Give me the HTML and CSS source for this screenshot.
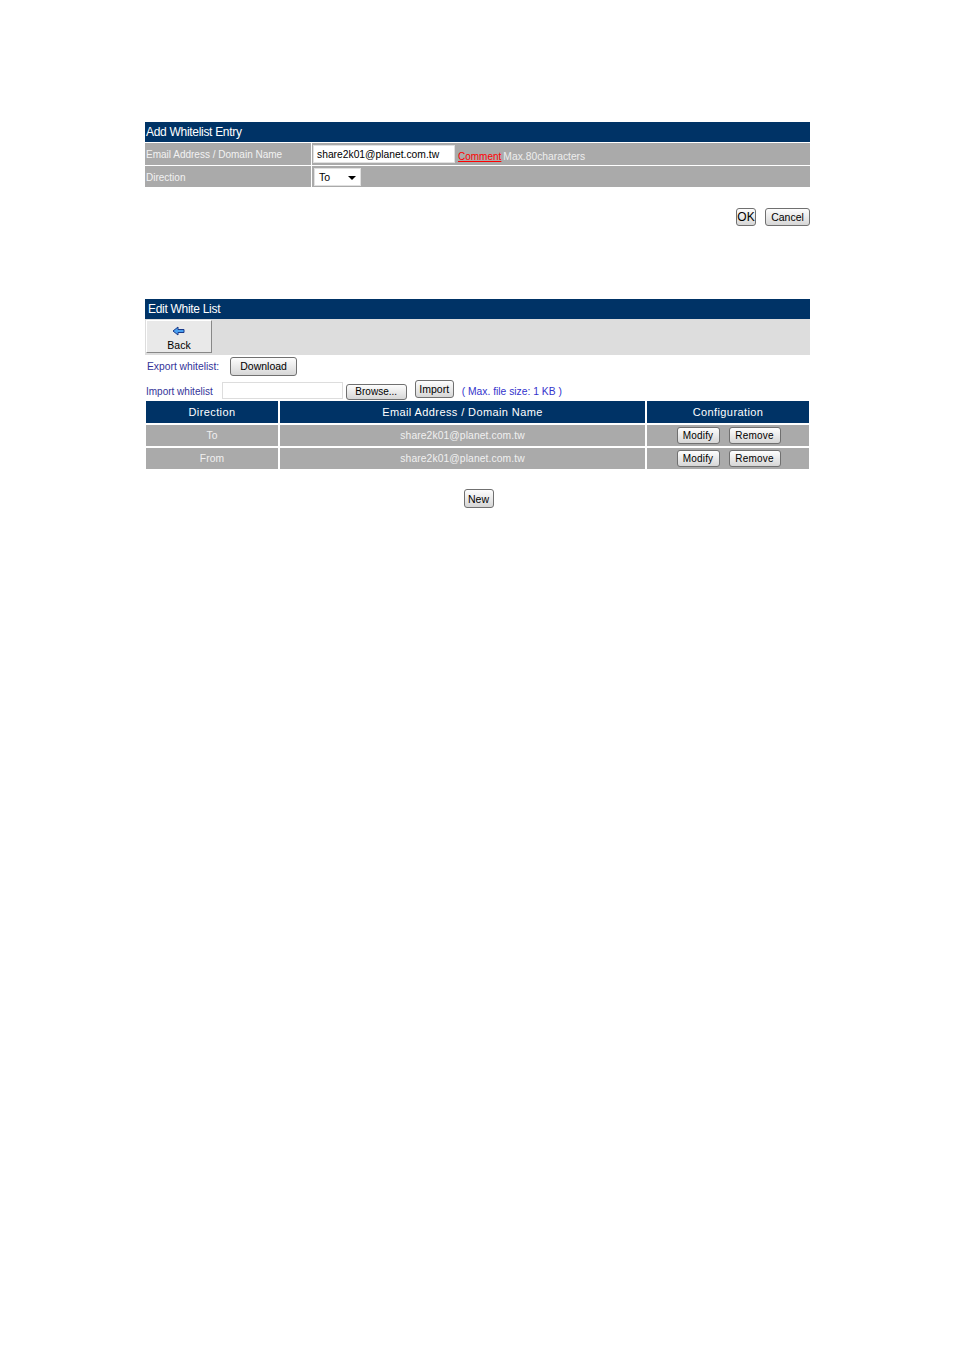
FILE: index.html
```html
<!DOCTYPE html>
<html>
<head>
<meta charset="utf-8">
<link rel="stylesheet" href="styles.css">
</head>
<body>
<div class="page">
  <section class="entry">
    <div class="bar">Add Whitelist Entry</div>
    <div class="form">
      <div class="lbl">Email Address / Domain Name</div>
      <div class="val val1">
        <span class="input">share2k01@planet.com.tw</span>
        <a class="comment">Comment</a><span class="hint">Max.80characters</span>
      </div>
      <div class="lbl">Direction</div>
      <div class="val val2">
        <span class="select">To<span class="caret"></span></span>
      </div>
    </div>
    <div class="actions">
      <button class="btn ok">OK</button>
      <button class="btn cancel">Cancel</button>
    </div>
  </section>

  <section class="edit">
    <div class="bar bar2">Edit White List</div>
    <div class="toolbar">
      <div class="back">
        <svg width="14" height="10" viewBox="0 0 14 10"><path d="M1 5 L6 1 L6 3.5 L12 3.5 L12 6.5 L6 6.5 L6 9 Z" fill="#4aa0f0" stroke="#1a3a8a" stroke-width="1" stroke-linejoin="round"/></svg>
        <span>Back</span>
      </div>
    </div>
    <div class="export">
      <span class="blue">Export whitelist:</span>
      <button class="btn download">Download</button>
    </div>
    <div class="import">
      <span class="blue small">Import whitelist</span>
      <span class="file"></span>
      <button class="btn browse">Browse...</button>
      <button class="btn importbtn">Import</button>
      <span class="max">( Max. file size: 1 KB )</span>
    </div>
    <div class="list">
      <div class="th">Direction</div>
      <div class="th">Email Address / Domain Name</div>
      <div class="th">Configuration</div>
      <div class="td">To</div>
      <div class="td">share2k01@planet.com.tw</div>
      <div class="td cfg"><button class="btn sm">Modify</button><button class="btn sm rm">Remove</button></div>
      <div class="td">From</div>
      <div class="td">share2k01@planet.com.tw</div>
      <div class="td cfg"><button class="btn sm">Modify</button><button class="btn sm rm">Remove</button></div>
    </div>
    <div class="newrow"><button class="btn new">New</button></div>
  </section>
</div>
</body>
</html>
```

FILE: styles.css
```css
* { box-sizing: border-box; }
body {
  margin: 0;
  background: #fff;
  font-family: "Liberation Sans", Arial, sans-serif;
  font-size: 11px;
  color: #000;
}
.page {
  padding: 122px 0 0 145px;
  width: 810px;
}
.bar {
  background: #003366;
  color: #fff;
  font-size: 12px;
  height: 20px;
  line-height: 20px;
  padding-left: 1px;
  letter-spacing: -0.3px;
}
.form {
  display: grid;
  grid-template-columns: 166px 1fr;
  column-gap: 1px;
  row-gap: 1px;
  margin-top: 1px;
}
.lbl, .val {
  background: #aaaaaa;
  color: #f2f2f2;
}
.lbl {
  padding: 1px 0 0 1px;
  display: flex;
  align-items: center;
  font-size: 10px;
}
.val1 { height: 22px; display: flex; align-items: center; padding-left: 1px; }
.val2 { height: 21px; display: flex; align-items: center; padding-left: 2px; }
.input {
  display: inline-block;
  width: 142px;
  height: 18px;
  background: #fff;
  color: #000;
  border: 1px solid #e0e0e0;
  padding-left: 3px;
  line-height: 17px;
  font-size: 10.3px;
}
.comment {
  color: #ff0000;
  text-decoration: underline;
  margin-left: 3px;
  margin-top: 4px;
  font-size: 10px;
}
.hint { margin-left: 2px; margin-top: 4px; color: #eee; font-size: 10.3px; }
.select {
  display: inline-block;
  position: relative;
  width: 47px;
  height: 18px;
  background: #fff;
  color: #000;
  border: 1px solid #e0e0e0;
  padding-left: 4px;
  line-height: 16px;
  font-size: 10.5px;
}
.caret {
  position: absolute;
  right: 4px;
  top: 7px;
  border-left: 4px solid transparent;
  border-right: 4px solid transparent;
  border-top: 4px solid #000;
}
.actions {
  display: flex;
  justify-content: flex-end;
  gap: 9px;
  margin-top: 21px;
}
.btn {
  font-family: "Liberation Sans", Arial, sans-serif;
  font-size: 10.5px;
  color: #000;
  background: linear-gradient(#fdfdfd, #e6e6e6 60%, #d6d6d6);
  border: 1px solid #707070;
  border-radius: 3px;
  padding: 0;
  height: 18px;
  line-height: 16px;
}
.ok { width: 20px; font-size: 12px; }
.cancel { width: 45px; }
.edit { margin-top: 73px; }
.bar2 { height: 20px; padding-left: 3px; }
.toolbar {
  background: #dddddd;
  height: 36px;
  padding: 1px 0 0 1px;
}
.back {
  width: 66px;
  height: 33px;
  background: #e9e9e9;
  border-top: 1px solid #fff;
  border-left: 1px solid #fff;
  border-right: 1px solid #888;
  border-bottom: 1px solid #888;
  display: flex;
  flex-direction: column;
  align-items: center;
  padding-top: 5px;
  gap: 3px;
  font-size: 10.5px;
}
.export {
  display: flex;
  align-items: center;
  height: 22px;
  margin-top: 0;
  padding-left: 2px;
  font-size: 10.3px;
}
.blue { color: #333399; }
.small { font-size: 10px; margin-top: 3px; }
.download { width: 67px; height: 19px; margin-left: 11px; }
.import {
  display: flex;
  align-items: center;
  height: 23px;
  margin-top: 1px;
  padding-left: 1px;
}
.file {
  display: inline-block;
  width: 121px;
  height: 17px;
  border: 1px solid #ddd;
  margin-left: 9px;
  margin-top: 2px;
}
.browse { width: 61px; height: 16px; margin-left: 3px; margin-top: 4px; line-height: 14px; font-size: 10px; }
.importbtn { width: 39px; height: 18px; margin-left: 8px; margin-top: -2px; }
.max { color: #3333cc; font-size: 10.3px; margin-left: 8px; margin-top: 3px; }
.list {
  display: grid;
  grid-template-columns: 132px 365px 162px;
  column-gap: 2px;
  row-gap: 2px;
  margin-left: 1px;
  margin-top: 0;
  width: 663px;
}
.th {
  background: #003366;
  color: #fff;
  height: 22px;
  line-height: 22px;
  text-align: center;
  font-size: 11px;
  letter-spacing: 0.4px;
}
.td {
  background: #aaaaaa;
  color: #f0f0f0;
  height: 21px;
  line-height: 21px;
  text-align: center;
  font-size: 10.3px;
  letter-spacing: 0.1px;
}
.cfg {
  display: flex;
  justify-content: center;
  align-items: center;
  gap: 9px;
  padding-left: 1px;
  letter-spacing: 0;
}
.sm { width: 43px; height: 17px; line-height: 15px; font-size: 10px; letter-spacing: 0.2px; }
.sm.rm { width: 52px; }
.newrow {
  display: flex;
  justify-content: center;
  margin-top: 20px;
  padding-left: 2px;
}
.new { width: 30px; height: 19px; }
```
